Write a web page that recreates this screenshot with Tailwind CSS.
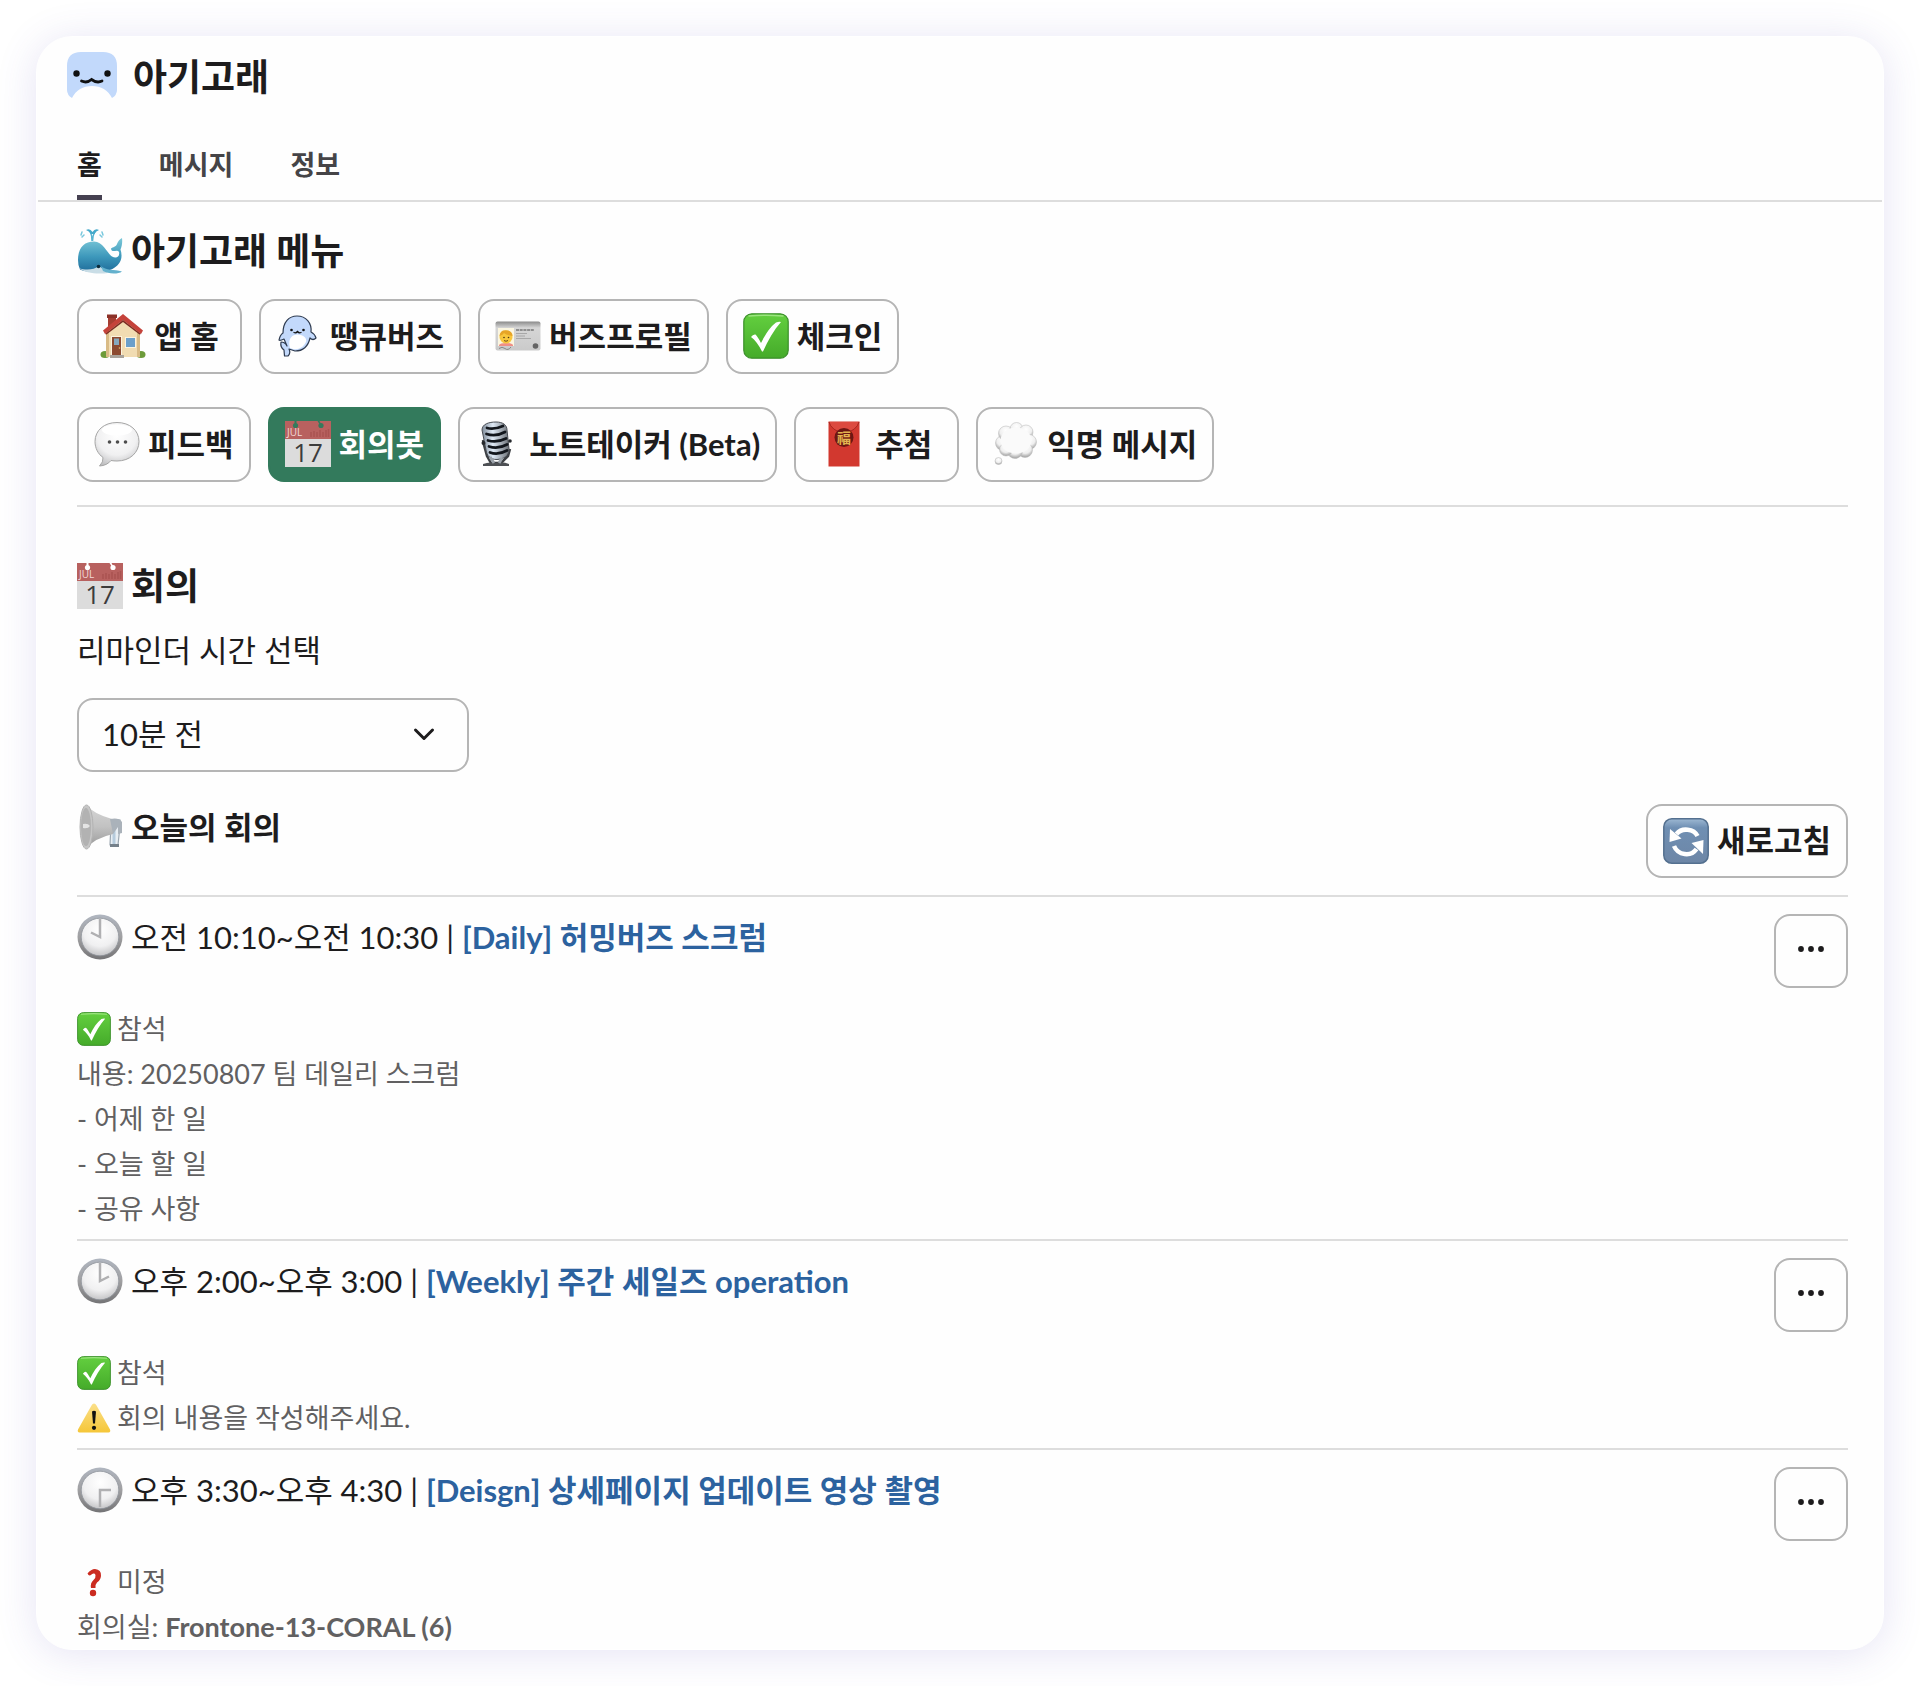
<!DOCTYPE html>
<html lang="ko">

<head>
  <meta charset="UTF-8" />
  <meta name="viewport" content="width=device-width, initial-scale=1.0" />
  <title>아기고래</title>
  <script src="https://cdn.jsdelivr.net/npm/@tailwindcss/browser@4"></script>
</head>

<body class="bg-white text-[#1d1c1d] font-[Lato,'Noto_Sans_CJK_KR',sans-serif]">

  <!-- Icon sprite -->
  <svg class="absolute w-0 h-0" aria-hidden="true">
    <defs>
      <linearGradient id="g-green" x1="0" y1="0" x2="0" y2="1">
        <stop offset="0" stop-color="#63cf3f" />
        <stop offset="1" stop-color="#45ab2a" />
      </linearGradient>
      <linearGradient id="g-blue" x1="0" y1="0" x2="0" y2="1">
        <stop offset="0" stop-color="#9db8d3" />
        <stop offset=".2" stop-color="#6f8fb3" />
        <stop offset="1" stop-color="#6d86a6" />
      </linearGradient>
      <linearGradient id="g-whale" x1="0" y1="0" x2="0" y2="1">
        <stop offset="0" stop-color="#7cc9d9" />
        <stop offset=".55" stop-color="#3d98bb" />
        <stop offset="1" stop-color="#1f6c9a" />
      </linearGradient>
      <linearGradient id="g-rim" x1="0" y1="0" x2="0" y2="1">
        <stop offset="0" stop-color="#b0b6c0" />
        <stop offset=".5" stop-color="#a0a0a2" />
        <stop offset="1" stop-color="#747476" />
      </linearGradient>
      <radialGradient id="g-face" cx=".5" cy=".3" r=".75">
        <stop offset="0" stop-color="#ffffff" />
        <stop offset=".6" stop-color="#f0f0f1" />
        <stop offset="1" stop-color="#bcbcbe" />
      </radialGradient>
      <radialGradient id="g-puff" cx=".5" cy=".3" r=".7">
        <stop offset="0" stop-color="#ffffff" />
        <stop offset=".6" stop-color="#efefef" />
        <stop offset="1" stop-color="#9c9c9c" />
      </radialGradient>
      <linearGradient id="g-metal" x1="0" y1="0" x2="1" y2="0">
        <stop offset="0" stop-color="#7d8997" />
        <stop offset=".4" stop-color="#dfeaf6" />
        <stop offset="1" stop-color="#6c7177" />
      </linearGradient>
      <linearGradient id="g-card" x1="0" y1="0" x2="0" y2="1">
        <stop offset="0" stop-color="#8b8b8b" />
        <stop offset=".22" stop-color="#d6d6d6" />
        <stop offset="1" stop-color="#cacaca" />
      </linearGradient>
      <linearGradient id="g-horn" x1="0" y1="0" x2="0" y2="1">
        <stop offset="0" stop-color="#d6d6d6" />
        <stop offset=".5" stop-color="#c2c2c2" />
        <stop offset="1" stop-color="#979797" />
      </linearGradient>
      <linearGradient id="g-warn" x1="0" y1="0" x2="0" y2="1">
        <stop offset="0" stop-color="#fbe08a" />
        <stop offset="1" stop-color="#f5c638" />
      </linearGradient>
    </defs>

    <symbol id="i-avatar" viewBox="0 0 50 50">
      <path d="M0 14Q0 0 14 0H36Q50 0 50 14V38Q50 43 45 46C41 38 34 34 25 34S9 38 5 46Q0 43 0 38Z" fill="#c2d9fb" />
      <circle cx="9.500" cy="21.500" r="3.200" fill="#111" />
      <circle cx="40.500" cy="21.500" r="3.200" fill="#111" />
      <path d="M14.500 29Q20 31.500 24.500 27.500Q30 31.500 35 29" fill="none" stroke="#111" stroke-width="2.800" stroke-linecap="round" />
    </symbol>

    <symbol id="i-whale" viewBox="0 0 46 46">
      <path d="M15 13C15 9 14.500 6 13 3M15.500 13C15.500 9 16.500 6 18 3" fill="none" stroke="#56b5d2" stroke-width="1.500" />
      <path d="M9 2Q13 0 15.500 4Q18 0 22 2Q19 3 17.500 6H14Q12 3 9 2Z" fill="#46aacb" />
      <path d="M5 4l-1 3M7 7l-2 2M25 4l1 3M23 7l2 2" stroke="#79c8dd" stroke-width="1.500" stroke-linecap="round" />
      <path d="M1 32C1 20 7 13.500 17 13.500C26 13.500 30 25 35 28.500C40 31 43 28 42 24Q41 22 38 23Q34 23.500 34 20.500C36 19 39 19 40 16C41 13 43 11 45 10C45.500 14 45 18 43.500 21.500C46 29 44 36 37 40C30 45 9 45 3 41.500Q1 38 1 32Z" fill="url(#g-whale)" />
      <path d="M2 40C8 42.500 17 42 22 38L31 45C20 46.500 8 45 2 40Z" fill="#c9dde6" />
      <path d="M24 38C29 43 37 41 45 43.500C41 46.500 31 46 26 43Z" fill="#64b1cd" />
      <circle cx="21.500" cy="38.500" r="1.800" fill="#0b2a3a" />
    </symbol>

    <symbol id="i-house" viewBox="0 0 46 46">
      <ellipse cx="5" cy="41.500" rx="4.500" ry="3.500" fill="#6d9b3a" />
      <ellipse cx="41" cy="41.500" rx="4.500" ry="3.500" fill="#6d9b3a" />
      <path d="M8 3H16V15H8Z" fill="#a53d31" />
      <path d="M7 1.500H17V5H7Z" fill="#8c3128" />
      <path d="M6 18L23 4L40 18V44H6Z" fill="#f1dcb2" />
      <path d="M6 19V44H9V17ZM37 17V44H40V19Z" fill="#d9bb86" />
      <path d="M23 1L43 17.500L41 21L23 7L5 21L3 17.500Z" fill="#c5423a" />
      <path d="M5 21L23 7L41 21L39.500 21.500L23 9L6.500 21.500Z" fill="#7e2a22" />
      <path d="M11 23H22V43H11Z" fill="#fbf3df" />
      <path d="M12 24H21V43H12Z" fill="#8c4a30" />
      <path d="M14 25.500H19V32H14Z" fill="#86a8bd" />
      <circle cx="19.500" cy="35" r=".8" fill="#e6c46a" />
      <path d="M25 24H36V35H25Z" fill="#fbf3df" />
      <path d="M26 25H35V34H26Z" fill="#6b9fca" />
      <path d="M10 42H24V45H10Z" fill="#a9a39b" />
    </symbol>

    <symbol id="i-babywhale" viewBox="0 0 46 46">
      <path d="M7 20C7 9 13 3 21 3C30 3 36 10 35 19C37 20 39 21 40 25Q37 28 34 25C32 34 26 38 19 38L13 36Q15 40 12 43H8.500L8 37Q4 34 5 29Q9 29 11 33L8 26Q4 28 3 27Q4 22 7 20Z" fill="#c3d9fb" stroke="#2e3b50" stroke-width="1.200" stroke-linejoin="round" />
      <path d="M14 35C12 28 14 22 21 21.500C28 22 31 25 30 29C27 35 21 38 14 35Z" fill="#fff" />
      <circle cx="15.500" cy="17" r="1.300" fill="#111" />
      <circle cx="27.500" cy="17" r="1.300" fill="#111" />
      <path d="M18 19.500Q20 20.500 21.500 18.500Q23 20.500 25 19.500" fill="none" stroke="#111" stroke-width="1.300" stroke-linecap="round" />
    </symbol>

    <symbol id="i-idcard" viewBox="0 0 46 46">
      <rect x=".5" y="8.500" width="45" height="29" rx="2" fill="url(#g-card)" />
      <rect x="3" y="15" width="16" height="18" fill="#fbf6e0" />
      <path d="M4 32Q5 30 11 30T18 32V33H4Z" fill="#f08f86" />
      <circle cx="11" cy="24" r="6.500" fill="#f8c63d" />
      <path d="M4.500 23Q5 16 13 17.500Q17.500 18.500 17.500 23Q11 22 9 20Q8 22 4.500 23Z" fill="#e7a426" />
      <circle cx="9" cy="24.500" r=".8" fill="#4a3311" />
      <circle cx="13.500" cy="24.500" r=".8" fill="#4a3311" />
      <path d="M9 27.500Q11 29 13 27.500" fill="none" stroke="#4a3311" stroke-width=".8" />
      <path d="M21 17H39" stroke="#777" stroke-width="1.500" stroke-dasharray="3 .7" />
      <path d="M21 20.500H32M21 23H30M21 25.500H36" stroke="#9d9d9d" stroke-width=".8" />
      <path d="M4 35.500Q7 33 10 35.500T16 34" fill="none" stroke="#777" stroke-width=".8" />
      <circle cx="40.500" cy="33" r="2.800" fill="#636363" />
    </symbol>

    <symbol id="i-check" viewBox="0 0 46 46">
      <rect x=".8" y=".8" width="44.400" height="44.400" rx="8" fill="url(#g-green)" stroke="#3b8f2a" stroke-width="1.200" />
      <path d="M6 3Q23 1.500 40 3" fill="none" stroke="#9be47f" stroke-width="1.500" stroke-linecap="round" />
      <path d="M8 24Q10 21 12.500 21.500Q15 24 18 30C22 22 27 14 33 9.500Q36 8.500 38 9C31 17 25 27 20 38.500H19C16 32 12 27 8 24Z" fill="#fff" />
    </symbol>

    <symbol id="i-bubble" viewBox="0 0 46 46">
      <path d="M23 1.500C36 1.500 45 9.500 45 20.500S36 40 23 40Q20 40 17 39.500Q13 44.500 5.500 45Q9.500 41 9 36.500C4 33 1 27 1 20.500C1 9.500 10 1.500 23 1.500Z" fill="url(#g-face)" stroke="#a5a5a5" stroke-width="1" />
      <ellipse cx="23" cy="9" rx="15" ry="5.500" fill="#fff" />
      <circle cx="15.500" cy="21" r="1.800" fill="#4d4d4d" />
      <circle cx="23.500" cy="21" r="1.800" fill="#4d4d4d" />
      <circle cx="31.500" cy="21" r="1.800" fill="#4d4d4d" />
    </symbol>

    <symbol id="i-calendar" viewBox="0 0 46 46">
      <rect width="46" height="46" fill="#dcdcdc" />
      <rect width="46" height="18" fill="#b8615f" />
      <path d="M26 11V16M29 10V16M32 11V16M35 9V16M38 11V16M41 9V16M43.500 8V16" stroke="#a95351" stroke-width="1.500" />
      <circle cx="10.500" cy="4.500" r="2.600" fill="currentColor" />
      <circle cx="36" cy="4.500" r="2.600" fill="currentColor" />
      <path d="M9.500 0H11.500V4H9.500ZM32.500 0L34.500 0L36.500 4L35 4Z" fill="currentColor" />
    </symbol>

    <symbol id="i-mic" viewBox="0 0 46 46">
      <path d="M8 19L9 24L12 35L16 42H26L33 35L35 28" fill="none" stroke="#3b3e42" stroke-width="2.500" />
      <path d="M8 43Q14 40.500 20 42Q28 40 34 43V45H8Z" fill="#4d5054" />
      <path d="M7 9C7 3 14 1 21 1C28 1 32 4 32 9L34 28C34 35 29 38 22 38.500C15 38.500 12 35 11 29Z" fill="url(#g-metal)" stroke="#4a4e55" stroke-width="1" />
      <path d="M12 7Q19 9 28 5M11.500 13Q21 16 30 11M13 19.500Q22 22 31 17.500M14 25.500Q23 28.500 32 23.500M15 31.500Q23 34.500 32 29.500" fill="none" stroke="#12161c" stroke-width="2.800" stroke-linecap="round" />
      <path d="M15 36L19 42M27 37L24 42" stroke="#9aa1a9" stroke-width="3" />
      <circle cx="8.500" cy="22" r="2" fill="#25282c" />
      <circle cx="35" cy="20" r="1.800" fill="#25282c" />
    </symbol>

    <symbol id="i-envelope" viewBox="0 0 46 46">
      <rect x="7.500" y=".5" width="31" height="45" fill="#d2382f" />
      <path d="M8 1Q10 9 23 13Q36 9 38 1" fill="#dc4a40" stroke="#a8261f" stroke-width="1" />
      <circle cx="23" cy="16.500" r="9.500" fill="#6d1713" />
    </symbol>

    <symbol id="i-thought" viewBox="0 0 46 46">
      <g fill="url(#g-puff)" stroke="#c0c0c0" stroke-width=".6">
        <circle cx="10" cy="22" r="7.500" />
        <circle cx="13" cy="12.500" r="7.500" />
        <circle cx="23.500" cy="8" r="6.500" />
        <circle cx="33" cy="11" r="7" />
        <circle cx="36" cy="21" r="7.500" />
        <circle cx="32" cy="29" r="7.500" />
        <circle cx="22" cy="30" r="7.500" />
        <circle cx="13" cy="28.500" r="6.500" />
        <circle cx="5.500" cy="40" r="3.500" />
      </g>
      <ellipse cx="23" cy="19.500" rx="15.500" ry="13" fill="#fafafa" />
    </symbol>

    <symbol id="i-horn" viewBox="0 0 46 46">
      <path d="M34 20Q36 14 43 16V22L41 41Q37 43 33 41Z" fill="#e8eef3" stroke="#9ba6b0" stroke-width="1.200" />
      <path d="M37 22V40" stroke="#b6cbdc" stroke-width="3" />
      <path d="M33 40H42V43H33Z" fill="#75808a" />
      <path d="M9 1Q17 10 35 15Q38 22 36 30Q18 34 9 44.500Z" fill="url(#g-horn)" />
      <path d="M33 15Q42 13 45 18V29L41 30V23L36 30Z" fill="#aab2ba" />
      <ellipse cx="9.500" cy="23" rx="6.500" ry="22" fill="#c6c6c6" stroke="#b3b3b3" stroke-width="1" />
      <ellipse cx="9" cy="23" rx="5" ry="19" fill="#b2b2b2" />
      <path d="M6 20Q11 19 13 22Q11 25 6 24Z" fill="#e4e4e4" />
    </symbol>

    <symbol id="i-refresh" viewBox="0 0 46 46">
      <rect x=".8" y=".8" width="44.400" height="44.400" rx="8" fill="url(#g-blue)" stroke="#54708f" stroke-width="1.500" />
      <path d="M34.500 18C31 11 19 9 13.500 16" fill="none" stroke="#fff" stroke-width="4.500" />
      <path d="M7 11L6.500 24L18.500 20.500Z" fill="#fff" />
      <path d="M11 28C15 37.500 28 39 33.500 31" fill="none" stroke="#fff" stroke-width="4.500" />
      <path d="M28.500 25L40.500 22L40 36Z" fill="#fff" />
    </symbol>

    <symbol id="i-clock" viewBox="0 0 46 46">
      <circle cx="23" cy="23" r="22.500" fill="url(#g-rim)" />
      <circle cx="23" cy="23" r="18.800" fill="url(#g-face)" stroke="#8e939b" stroke-width=".8" />
    </symbol>

    <symbol id="i-warning" viewBox="0 0 34 34">
      <path d="M17 2.500Q18.500 2.500 19.500 4.500L33 28.500Q34 31 31.500 31.500H2.500Q0 31 1 28.500L14.500 4.500Q15.500 2.500 17 2.500Z" fill="url(#g-warn)" />
      <path d="M15 10.500Q17 9 19 10.500L18 22.500H16Z" fill="#111" />
      <circle cx="17" cy="26.800" r="2.100" fill="#111" />
    </symbol>

    <symbol id="i-question" viewBox="0 0 34 34">
      <path d="M10.500 8.500Q14 4 18 4Q24.500 4.500 24 11Q23.500 15 20 17.500Q18 19.500 18.500 23H14Q13 18 16.500 15Q19 12.500 18.500 10Q17.500 7.500 14.500 9.500Q12 12 10.500 8.500Z" fill="#cb2b20" />
      <circle cx="16" cy="28" r="3.200" fill="#cb2b20" />
    </symbol>

    <symbol id="i-more" viewBox="0 0 28 8">
      <circle cx="4" cy="4" r="2.900" fill="#1d1c1d" />
      <circle cx="14" cy="4" r="2.900" fill="#1d1c1d" />
      <circle cx="24" cy="4" r="2.900" fill="#1d1c1d" />
    </symbol>
  </svg>

  <div class="m-9 rounded-[36px] bg-[#fefefe] border border-white shadow-[0_4px_40px_rgba(80,70,180,0.15)] overflow-hidden">

    <!-- App header -->
    <header class="mx-px border-b-2 border-[#dddddd]">
      <div class="flex items-center gap-4 pl-[29px] pt-[15px]">
        <svg class="size-[50px]" aria-hidden="true"><use href="#i-avatar" /></svg>
        <h1 class="text-[37px] leading-[48px] font-bold">아기고래</h1>
      </div>
      <nav class="flex gap-[57px] pl-[39px] pt-[38px] text-[27px] leading-[50px] font-bold text-[#454447]">
        <a href="#home" class="h-[60px] border-b-[5px] border-[#454050] text-[#1d1c1d]" aria-current="page">홈</a>
        <a href="#messages">메시지</a>
        <a href="#about">정보</a>
      </nav>
    </header>

    <main class="pl-10 pr-[35px] pt-[25px]">
      <!-- Menu -->
      <h2 class="flex items-center gap-2 text-[37px] leading-[48px] font-bold">
        <svg class="size-[46px]" aria-hidden="true"><use href="#i-whale" /></svg>
        아기고래 메뉴
      </h2>
      <div class="mt-6 flex flex-col gap-[33px] text-[31px] leading-[45px] font-bold">
        <div class="flex flex-wrap gap-[17px]">
          <button type="button" class="flex items-center justify-center gap-2 h-[75px] min-w-[165px] px-[15px] pb-px rounded-2xl border-2 border-[#b5b5b5]">
            <svg class="size-[46px]" aria-hidden="true"><use href="#i-house" /></svg>앱 홈
          </button>
          <button type="button" class="flex items-center justify-center gap-2 h-[75px] min-w-[165px] px-[15px] pb-px rounded-2xl border-2 border-[#b5b5b5]">
            <svg class="size-[46px]" aria-hidden="true"><use href="#i-babywhale" /></svg>땡큐버즈
          </button>
          <button type="button" class="flex items-center justify-center gap-2 h-[75px] min-w-[165px] px-[15px] pb-px rounded-2xl border-2 border-[#b5b5b5]">
            <svg class="size-[46px]" aria-hidden="true"><use href="#i-idcard" /></svg>버즈프로필
          </button>
          <button type="button" class="flex items-center justify-center gap-2 h-[75px] min-w-[165px] px-[15px] pb-px rounded-2xl border-2 border-[#b5b5b5]">
            <svg class="size-[46px]" aria-hidden="true"><use href="#i-check" /></svg>체크인
          </button>
        </div>
        <div class="flex flex-wrap gap-[17px]">
          <button type="button" class="flex items-center justify-center gap-2 h-[75px] min-w-[165px] px-[15px] pb-px rounded-2xl border-2 border-[#b5b5b5]">
            <svg class="size-[46px]" aria-hidden="true"><use href="#i-bubble" /></svg>피드백
          </button>
          <button type="button" class="flex items-center justify-center gap-2 h-[75px] min-w-[165px] px-[15px] pb-px rounded-2xl border-2 border-[#337a5c] bg-[#337a5c] text-white">
            <svg class="size-[46px] text-[#337a5c] font-[Open_Sans,sans-serif] font-normal" viewBox="0 0 46 46" aria-hidden="true">
              <use href="#i-calendar" />
              <text x="2" y="15" font-size="10" fill="#f1d9d8">JUL</text>
              <text x="23" y="41" text-anchor="middle" font-size="26" fill="#3c3c3c">17</text>
            </svg>회의봇
          </button>
          <button type="button" class="flex items-center justify-center gap-2 h-[75px] min-w-[165px] px-[15px] pb-px rounded-2xl border-2 border-[#b5b5b5]">
            <svg class="size-[46px]" aria-hidden="true"><use href="#i-mic" /></svg>노트테이커 (Beta)
          </button>
          <button type="button" class="flex items-center justify-center gap-2 h-[75px] min-w-[165px] px-[15px] pb-px rounded-2xl border-2 border-[#b5b5b5]">
            <svg class="size-[46px] font-['Noto_Sans_CJK_TC',sans-serif]" viewBox="0 0 46 46" aria-hidden="true">
              <use href="#i-envelope" />
              <text x="23" y="22" text-anchor="middle" font-size="14" fill="#e3b450">福</text>
            </svg>추첨
          </button>
          <button type="button" class="flex items-center justify-center gap-2 h-[75px] min-w-[165px] px-[15px] pb-px rounded-2xl border-2 border-[#b5b5b5]">
            <svg class="size-[46px]" aria-hidden="true"><use href="#i-thought" /></svg>익명 메시지
          </button>
        </div>
      </div>

      <!-- Reminder setting -->
      <section class="mt-[23px] pt-[55px] border-t-2 border-[#dddddd]">
        <h2 class="flex items-center gap-2 text-[37px] leading-[48px] font-bold">
          <svg class="size-[46px] text-white font-[Open_Sans,sans-serif] font-normal" viewBox="0 0 46 46" aria-hidden="true">
            <use href="#i-calendar" />
            <text x="2" y="15" font-size="10" fill="#f1d9d8">JUL</text>
            <text x="23" y="41" text-anchor="middle" font-size="26" fill="#3c3c3c">17</text>
          </svg>
          회의
        </h2>
        <label for="reminder" class="block mt-[18px] text-[31px] leading-[45px]">리마인더 시간 선택</label>
        <div class="relative mt-[25px] w-[392px]">
          <select id="reminder" class="block w-full h-[74px] pl-[23px] pr-16 pb-0.5 appearance-none rounded-2xl border-2 border-[#b5b5b5] bg-transparent text-[31px] leading-[45px]">
            <option>5분 전</option>
            <option selected>10분 전</option>
            <option>30분 전</option>
          </select>
          <svg class="absolute right-[34px] top-[29px] w-[22px] h-[14px] pointer-events-none" viewBox="0 0 22 14" fill="none" stroke="#1d1c1d" stroke-width="3" stroke-linecap="round" stroke-linejoin="round" aria-hidden="true"><path d="M2.500 3L11 11.500L19.500 3" /></svg>
        </div>
      </section>

      <!-- Today's meetings -->
      <div class="flex justify-between items-start mt-8 pb-[17px] border-b-2 border-[#dddddd] text-[31px] font-bold">
        <h3 class="flex items-center gap-2 leading-[46px]">
          <svg class="size-[46px]" aria-hidden="true"><use href="#i-horn" /></svg>
          오늘의 회의
        </h3>
        <button type="button" class="flex items-center justify-center gap-2 h-[74px] px-[15px] pb-px rounded-2xl border-2 border-[#b5b5b5] leading-[45px]">
          <svg class="size-[46px]" aria-hidden="true"><use href="#i-refresh" /></svg>새로고침
        </button>
      </div>

      <article class="pt-[17px] pb-2 border-b-2 border-[#dddddd]">
        <div class="flex justify-between items-start h-[74px]">
          <div class="flex items-center gap-2 text-[31px] leading-[46px]">
            <svg class="size-[46px]" viewBox="0 0 46 46" aria-hidden="true"><use href="#i-clock" /><path d="M23 5V23L14 18.500" fill="none" stroke="#b0b0b2" stroke-width="2.500" /></svg>
            <p>오전 10:10~오전 10:30 | <a href="#daily" class="font-bold text-[#2c629f]">[Daily] 허밍버즈 스크럼</a></p>
          </div>
          <button type="button" aria-label="더 보기" class="flex items-center justify-center size-[74px] pb-1 rounded-2xl border-2 border-[#b5b5b5]">
            <svg class="w-7 h-2" aria-hidden="true"><use href="#i-more" /></svg>
          </button>
        </div>
        <div class="mt-[18px] text-[27px] leading-[45px] text-[#616061]">
          <p class="flex items-center gap-1.5"><svg class="size-[34px]" aria-hidden="true"><use href="#i-check" /></svg>참석</p>
          <p>내용: 20250807 팀 데일리 스크럼</p>
          <p>- 어제 한 일</p>
          <p>- 오늘 할 일</p>
          <p>- 공유 사항</p>
        </div>
      </article>

      <article class="pt-[17px] pb-2 border-b-2 border-[#dddddd]">
        <div class="flex justify-between items-start h-[74px]">
          <div class="flex items-center gap-2 text-[31px] leading-[46px]">
            <svg class="size-[46px]" viewBox="0 0 46 46" aria-hidden="true"><use href="#i-clock" /><path d="M23 5V23L32 18.500" fill="none" stroke="#b0b0b2" stroke-width="2.500" /></svg>
            <p>오후 2:00~오후 3:00 | <a href="#weekly" class="font-bold text-[#2c629f]">[Weekly] 주간 세일즈 operation</a></p>
          </div>
          <button type="button" aria-label="더 보기" class="flex items-center justify-center size-[74px] pb-1 rounded-2xl border-2 border-[#b5b5b5]">
            <svg class="w-7 h-2" aria-hidden="true"><use href="#i-more" /></svg>
          </button>
        </div>
        <div class="mt-[18px] text-[27px] leading-[45px] text-[#616061]">
          <p class="flex items-center gap-1.5"><svg class="size-[34px]" aria-hidden="true"><use href="#i-check" /></svg>참석</p>
          <p class="flex items-center gap-1.5"><svg class="size-[34px]" aria-hidden="true"><use href="#i-warning" /></svg>회의 내용을 작성해주세요.</p>
        </div>
      </article>

      <article class="pt-[17px]">
        <div class="flex justify-between items-start h-[74px]">
          <div class="flex items-center gap-2 text-[31px] leading-[46px]">
            <svg class="size-[46px]" viewBox="0 0 46 46" aria-hidden="true"><use href="#i-clock" /><path d="M23 40V23H34" fill="none" stroke="#b0b0b2" stroke-width="2.500" /></svg>
            <p>오후 3:30~오후 4:30 | <a href="#design" class="font-bold text-[#2c629f]">[Deisgn] 상세페이지 업데이트 영상 촬영</a></p>
          </div>
          <button type="button" aria-label="더 보기" class="flex items-center justify-center size-[74px] pb-1 rounded-2xl border-2 border-[#b5b5b5]">
            <svg class="w-7 h-2" aria-hidden="true"><use href="#i-more" /></svg>
          </button>
        </div>
        <div class="mt-[18px] text-[27px] leading-[45px] text-[#616061]">
          <p class="flex items-center gap-1.5"><svg class="size-[34px]" aria-hidden="true"><use href="#i-question" /></svg>미정</p>
          <p>회의실: <b>Frontone-13-CORAL (6)</b></p>
        </div>
      </article>
    </main>
  </div>

</body>

</html>
